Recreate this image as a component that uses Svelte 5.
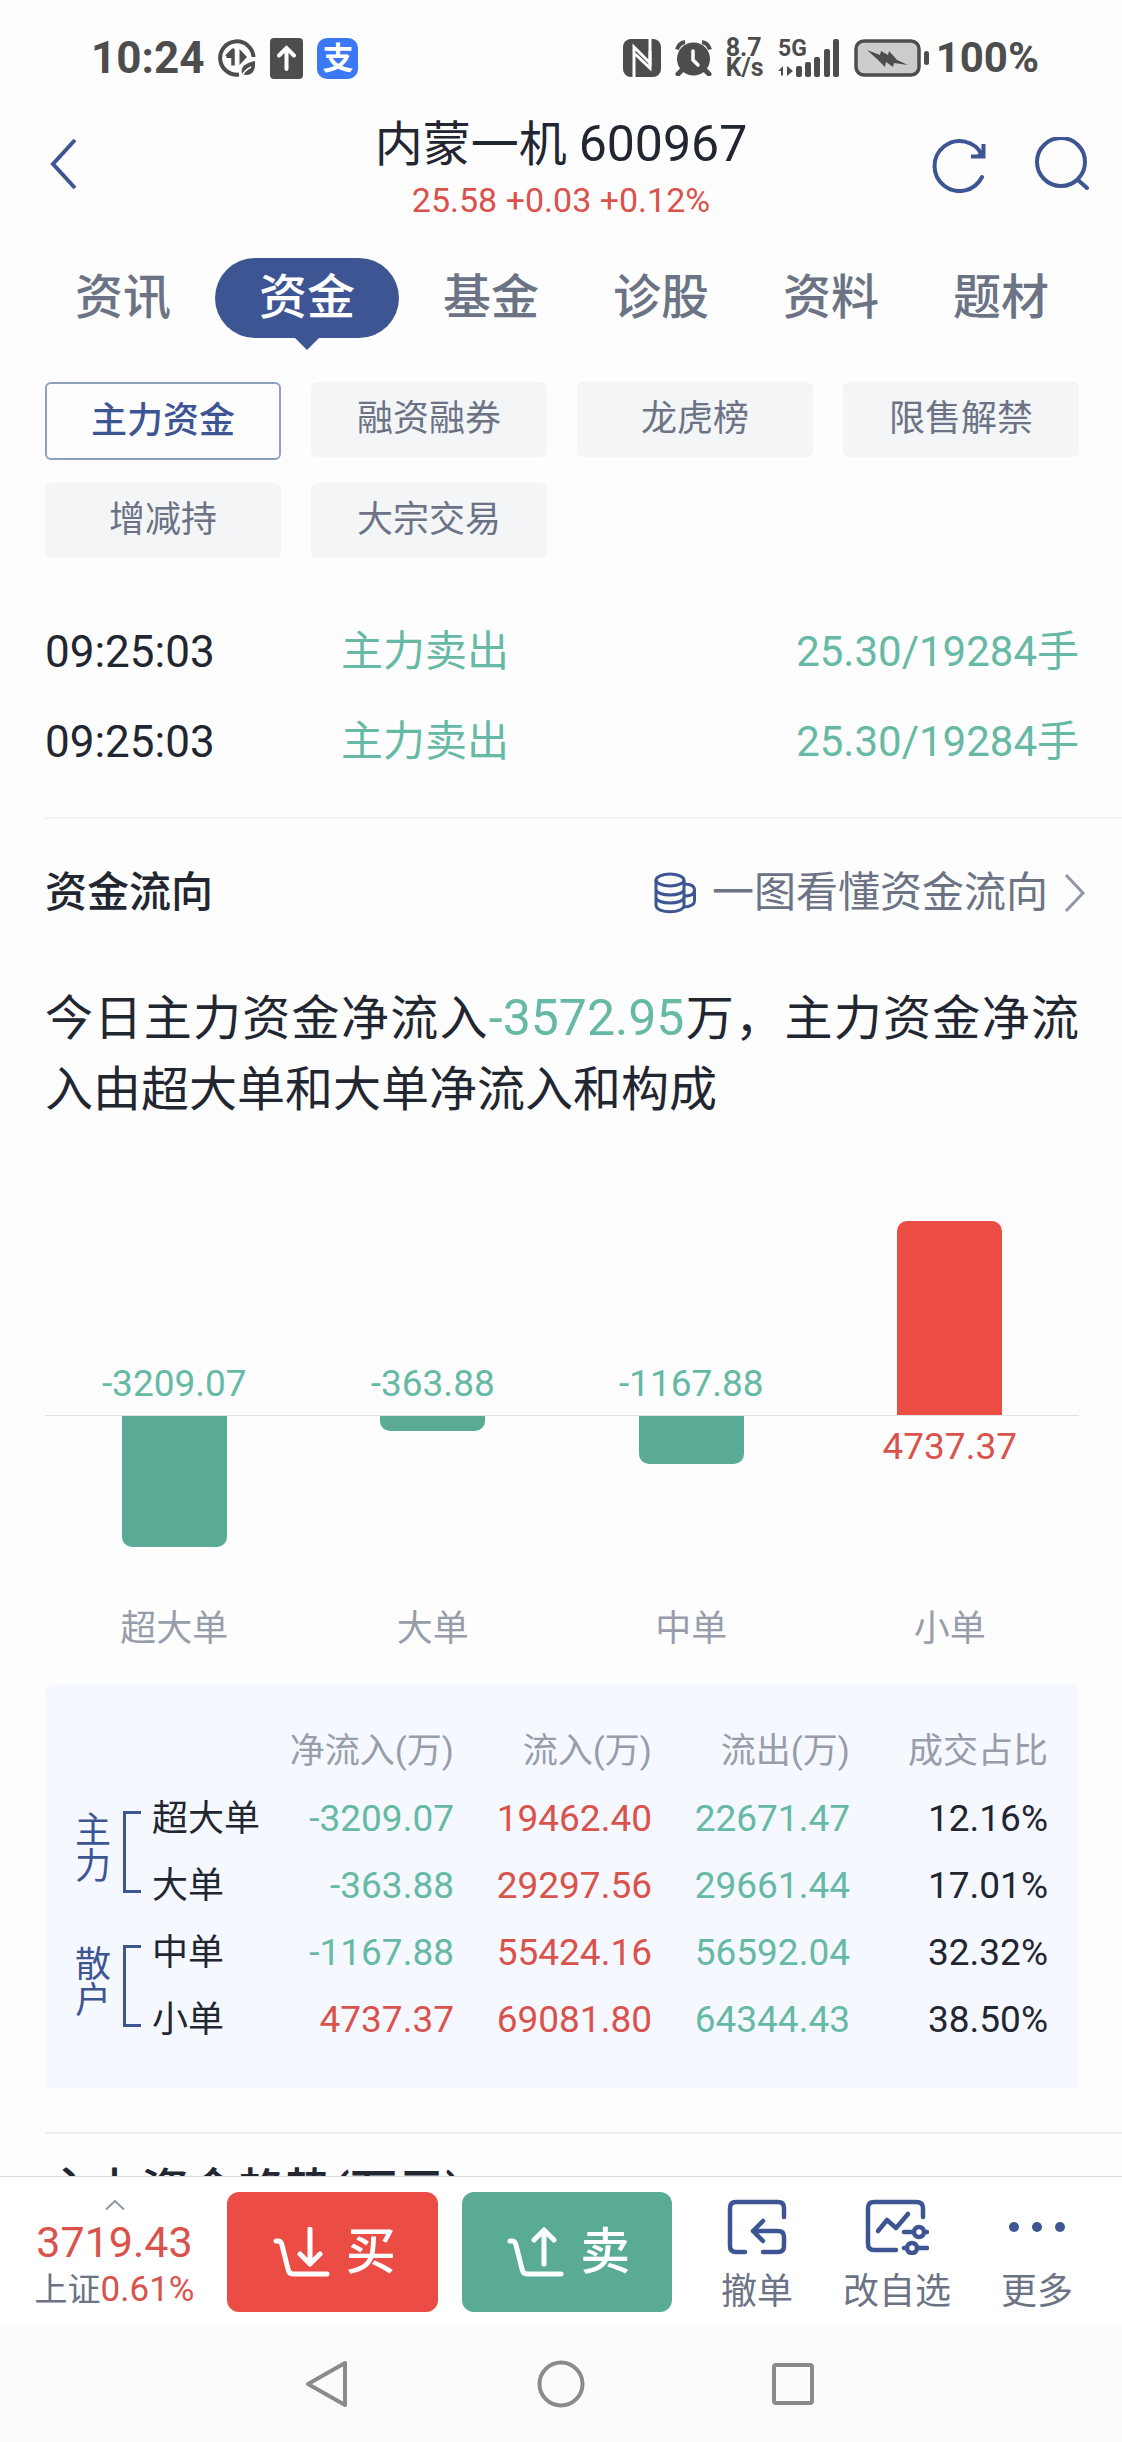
<script lang="ts">
  interface Flow {
    name: string;
    net: number;
    inflow: string;
    outflow: string;
    share: string;
  }

  interface Group {
    label: string;
    flows: Flow[];
  }

  const tabs = ["资讯", "资金", "基金", "诊股", "资料", "题材"];
  const filters = ["主力资金", "融资融券", "龙虎榜", "限售解禁", "增减持", "大宗交易"];

  const trades = [
    { time: "09:25:03", kind: "主力卖出", deal: "25.30/19284手" },
    { time: "09:25:03", kind: "主力卖出", deal: "25.30/19284手" },
  ];

  const groups: Group[] = [
    {
      label: "主力",
      flows: [
        { name: "超大单", net: -3209.07, inflow: "19462.40", outflow: "22671.47", share: "12.16%" },
        { name: "大单", net: -363.88, inflow: "29297.56", outflow: "29661.44", share: "17.01%" },
      ],
    },
    {
      label: "散户",
      flows: [
        { name: "中单", net: -1167.88, inflow: "55424.16", outflow: "56592.04", share: "32.32%" },
        { name: "小单", net: 4737.37, inflow: "69081.80", outflow: "64344.43", share: "38.50%" },
      ],
    },
  ];

  const MAX_BAR = 194;
  const flows = groups.flatMap((g) => g.flows);
  const peak = Math.max(...flows.map((f) => Math.abs(f.net)));

  let activeTab = $state("资金");
  let activeFilter = $state("主力资金");

  function barHeight(net: number) {
    return Math.round((Math.abs(net) / peak) * MAX_BAR);
  }
</script>

<div class="app">
  <div class="status">
    <div class="status-side">
      <span class="clock">10:24</span>
      <svg width="38" height="38" viewBox="0 0 38 38" fill="none">
        <path d="M35.5 18A16.7 16.7 0 1 0 21 35.6" stroke="#4d4d4d" stroke-width="4" />
        <path d="M8.5 17.5 15 11v15.5" stroke="#4d4d4d" stroke-width="3.5" stroke-linejoin="round" />
        <path d="M8 19h6v-7z" fill="#4d4d4d" />
        <path d="M21.5 10v16L29 18z" fill="#4d4d4d" />
        <path d="M37 22c-9 2-15 5-13 13 8 3 14-1 13-13z" fill="#4d4d4d" />
        <path d="M24 37c2-5 5-7 9-9" stroke="#fff" stroke-width="1.5" />
      </svg>
      <svg width="33" height="41" viewBox="0 0 33 41" fill="none">
        <rect width="33" height="41" rx="4" fill="#4d4d4d" />
        <path d="M16.500 31V10M9 17.500l7.500-7.500 7.500 7.500" stroke="#fff" stroke-width="4" stroke-linecap="round" />
      </svg>
      <span class="pay">支</span>
    </div>
    <div class="status-side">
      <svg width="38" height="38" viewBox="0 0 38 38" fill="none">
        <rect width="38" height="38" rx="8" fill="#4d4d4d" />
        <path d="M11 38V8l16 16V12" stroke="#fff" stroke-width="3" />
        <path d="M27 0v30L12 16" stroke="#fff" stroke-width="3" transform="translate(0 -1)" />
      </svg>
      <svg width="37" height="36" viewBox="0 0 37 36" fill="none">
        <circle cx="18.500" cy="19" r="16.500" fill="#4d4d4d" />
        <path d="M2 9.500Q4 3 10 2M35 9.500Q33 3 27 2" stroke="#4d4d4d" stroke-width="4" />
        <path d="M7 30l-4 4M30 30l4 4" stroke="#4d4d4d" stroke-width="5" stroke-linecap="round" />
        <path d="M18 11v9l5 5" stroke="#fff" stroke-width="3.500" stroke-linecap="round" stroke-linejoin="round" />
      </svg>
      <span class="speed">8.7<br />K/s</span>
      <svg class="signal" width="62" height="38" viewBox="0 0 62 38" fill="#4d4d4d">
        <text x="0" y="17">5G</text>
        <path d="M0 32l5-5v9.500H3V32zM9 27v10l6-5z" />
        <rect x="18" y="27" width="6" height="11" rx="2" />
        <rect x="27" y="23" width="6" height="15" rx="2" />
        <rect x="36" y="18" width="6" height="20" rx="2" />
        <rect x="46" y="10" width="6" height="28" rx="2" />
        <rect x="55" y="0" width="6" height="38" rx="2" />
      </svg>
      <svg width="76" height="38" viewBox="0 0 76 38">
        <rect x="2" y="2" width="63" height="34" rx="8" fill="#ccc" stroke="#4d4d4d" stroke-width="3.500" />
        <rect x="70" y="12" width="5" height="14" rx="2.500" fill="#4d4d4d" />
        <path d="M13 11l13 5 1-4 7 4 1-4 8 9 11 5-14-2-1 4-7-5-1 5-8-8z" fill="#4d4d4d" />
      </svg>
      <span class="charge">100%</span>
    </div>
  </div>

  <header class="header">
    <button type="button" class="icon-btn back" aria-label="返回">
      <svg width="28" height="54" viewBox="0 0 28 54" fill="none" stroke="#3e5594" stroke-width="4">
        <path d="M26 3 4 27l22 24" />
      </svg>
    </button>
    <div class="stock">
      <h1>内蒙一机 <span>600967</span></h1>
      <p class="rise">25.58 +0.03 +0.12%</p>
    </div>
    <div class="tools">
      <button type="button" class="icon-btn" aria-label="刷新">
        <svg width="56" height="56" viewBox="0 0 56 56" fill="none" stroke="#3e5594" stroke-width="4">
          <path d="M50 40A25 25 0 1 1 50 18" stroke-linecap="round" />
          <path d="M51.500 7v12.500H39" />
          <path d="M44 19l7-7v7z" fill="#3e5594" stroke="none" />
        </svg>
      </button>
      <button type="button" class="icon-btn" aria-label="搜索">
        <svg width="56" height="56" viewBox="0 0 56 56" fill="none" stroke="#3e5594" stroke-width="4">
          <circle cx="28" cy="25" r="24" />
          <path d="M45 43l9 8" stroke-linecap="round" />
        </svg>
      </button>
    </div>
  </header>

  <main class="content">
    <nav class="tabs">
      {#each tabs as tab (tab)}
        <button type="button" class="tab" class:active={tab === activeTab} onclick={() => (activeTab = tab)}>
          {tab}
        </button>
      {/each}
    </nav>

    <div class="filters">
      {#each filters as f (f)}
        <button type="button" class="filter" class:active={f === activeFilter} onclick={() => (activeFilter = f)}>
          {f}
        </button>
      {/each}
    </div>

    <ul class="trades">
      {#each trades as t}
        <li>
          <span class="time">{t.time}</span>
          <span class="fall">{t.kind}</span>
          <span class="fall">{t.deal}</span>
        </li>
      {/each}
    </ul>

    <section class="flow">
      <div class="flow-head">
        <h2>资金流向</h2>
        <a href="#guide">
          <svg width="42" height="42" viewBox="0 0 42 42" fill="none" stroke="#3e5594" stroke-width="3">
            <ellipse cx="16" cy="8" rx="14" ry="6" />
            <path d="M2 8v25c0 9 28 9 28 0V8M2 17c0 8 28 8 28 0M2 25c0 8 28 8 28 0" />
            <path d="M30 12c7 0 10.500 2 10.500 6v11c0 4-4 5.500-10.500 6M40.500 18c0 4-4 6-10.500 6" />
          </svg>
          <span>一图看懂资金流向</span>
          <svg width="22" height="38" viewBox="0 0 22 38" fill="none" stroke="#9096a4" stroke-width="3">
            <path d="M2 1l17 18L2 37" />
          </svg>
        </a>
      </div>

      <p class="summary">
        今日主力资金净流入<span class="fall">-3572.95</span>万，主力资金净流入由超大单和大单净流入和构成
      </p>

      <div class="chart">
        {#each flows as f (f.name)}
          <div class="column">
            <div class="above">
              {#if f.net > 0}
                <div class="bar up" style="height: {barHeight(f.net)}px"></div>
              {:else}
                <span class="value fall">{f.net.toFixed(2)}</span>
              {/if}
            </div>
            <div class="below">
              {#if f.net > 0}
                <span class="value rise">{f.net.toFixed(2)}</span>
              {:else}
                <div class="bar down" style="height: {barHeight(f.net)}px"></div>
              {/if}
            </div>
            <span class="column-name">{f.name}</span>
          </div>
        {/each}
      </div>

      <div class="panel">
        <table>
          <colgroup>
            <col class="c-group" />
            <col class="c-name" />
            <col class="c-net" />
            <col />
            <col />
            <col />
          </colgroup>
          <thead>
            <tr>
              <td colspan="2"></td>
              <th scope="col">净流入(万)</th>
              <th scope="col">流入(万)</th>
              <th scope="col">流出(万)</th>
              <th scope="col">成交占比</th>
            </tr>
          </thead>
          <tbody>
            {#each groups as g (g.label)}
              {#each g.flows as f, i (f.name)}
                <tr>
                  {#if i === 0}
                    <th scope="rowgroup" rowspan={g.flows.length}>
                      <div class="group">
                        <span>{g.label}</span>
                        <i></i>
                      </div>
                    </th>
                  {/if}
                  <th scope="row">{f.name}</th>
                  <td class={f.net > 0 ? "rise" : "fall"}>{f.net.toFixed(2)}</td>
                  <td class="rise">{f.inflow}</td>
                  <td class="fall">{f.outflow}</td>
                  <td>{f.share}</td>
                </tr>
              {/each}
            {/each}
          </tbody>
        </table>
      </div>
    </section>

    <section class="trend">
      <h2>主力资金趋势(万元)</h2>
    </section>
  </main>

  <footer class="toolbar">
    <button type="button" class="index">
      <svg width="20" height="10" viewBox="0 0 20 10" fill="none" stroke="#9096a4" stroke-width="2">
        <path d="M1 9.500 10 1l9 8.500" />
      </svg>
      <span class="index-value rise">3719.43</span>
      <span class="index-name">上证<span class="rise">0.61%</span></span>
    </button>
    <div class="orders">
      <button type="button" class="order buy">
        <svg width="57" height="50" viewBox="0 0 57 50" fill="none" stroke="#fff" stroke-width="5" stroke-linecap="round" stroke-linejoin="round">
          <path d="M3 14h2q3 0 4 4l6 24q1 5 5 5h34M37 2v35M27 27l10 10 10-10" />
        </svg>
        买
      </button>
      <button type="button" class="order sell">
        <svg width="57" height="50" viewBox="0 0 57 50" fill="none" stroke="#fff" stroke-width="5" stroke-linecap="round" stroke-linejoin="round">
          <path d="M3 14h2q3 0 4 4l6 24q1 5 5 5h34M37 37V3M27 13 37 3l10 10" />
        </svg>
        卖
      </button>
    </div>
    <div class="actions">
      <button type="button" class="action">
        <svg width="60" height="56" viewBox="0 0 60 56" fill="none" stroke="#3e5594" stroke-width="4.500" stroke-linecap="round" stroke-linejoin="round">
          <path d="M18 53H9q-6 0-6-6V9q0-6 6-6h42q6 0 6 6v9" />
          <path d="M36 53h15q6 0 6-6V38q0-6-6-6H26M36 22 26 32l10 10" />
        </svg>
        撤单
      </button>
      <button type="button" class="action">
        <svg width="64" height="56" viewBox="0 0 64 56" fill="none" stroke="#3e5594" stroke-width="4.500" stroke-linecap="round" stroke-linejoin="round">
          <path d="M31 51H9q-6 0-6-6V9q0-6 6-6h42q7 0 7 6v9" />
          <path d="M13 32l9-11 9 8 12-14" />
          <path d="M39 33h8M60 33h2M39 49h2M53 49h9" />
          <circle cx="54" cy="33" r="5" />
          <circle cx="47" cy="49" r="5" />
        </svg>
        改自选
      </button>
      <button type="button" class="action">
        <svg width="60" height="56" viewBox="0 0 60 56" fill="#3e5594">
          <circle cx="7" cy="28" r="5" />
          <circle cx="30" cy="28" r="5" />
          <circle cx="53" cy="28" r="5" />
        </svg>
        更多
      </button>
    </div>
  </footer>

  <div class="system-nav">
    <button type="button" class="icon-btn" aria-label="系统返回">
      <svg width="48" height="48" viewBox="0 0 48 48" fill="none" stroke="#8b8b8b" stroke-width="4" stroke-linejoin="round">
        <path d="M41 3v42L4 24z" />
      </svg>
    </button>
    <button type="button" class="icon-btn" aria-label="主屏幕">
      <svg width="48" height="48" viewBox="0 0 48 48" fill="none" stroke="#8b8b8b" stroke-width="4">
        <circle cx="24" cy="24" r="21.500" />
      </svg>
    </button>
    <button type="button" class="icon-btn" aria-label="最近任务">
      <svg width="48" height="48" viewBox="0 0 48 48" fill="none" stroke="#8b8b8b" stroke-width="4">
        <rect x="4" y="5" width="38" height="38" rx="2" />
      </svg>
    </button>
  </div>
</div>

<style>
  :global(body) {
    background: #fdfdfd;
  }

  .app {
    --ink: #222631;
    --muted: #6b7385;
    --pale: #979daa;
    --navy: #3e5594;
    --red: #d9534c;
    --red-fill: #eb4d44;
    --green: #66b9a5;
    --green-fill: #59ab95;
    display: flex;
    flex-direction: column;
    height: 100vh;
    color: var(--ink);
    font-family: Roboto, "Noto Sans CJK SC", sans-serif;
    font-size: 36px;
    line-height: 50px;
  }

  h1,
  h2,
  p,
  ul {
    margin: 0;
    padding: 0;
    list-style: none;
  }

  button {
    border: none;
    margin: 0;
    padding: 0;
    background: none;
    font: inherit;
    color: inherit;
    cursor: pointer;
  }

  svg {
    display: block;
    flex-shrink: 0;
  }

  .rise {
    color: var(--red);
  }

  .fall {
    color: var(--green);
  }

  .status {
    display: flex;
    justify-content: space-between;
    padding: 36px 83px 36px 91px;
    color: #4d4d4d;
    font-weight: 700;
  }

  .status-side {
    display: flex;
    align-items: center;
    gap: 14px;
    height: 44px;
  }

  .clock {
    font-size: 44px;
    line-height: 44px;
  }

  .charge {
    margin-left: -8px;
    font-size: 42px;
    line-height: 44px;
  }

  .pay {
    width: 41px;
    border-radius: 10px;
    background: #3a78f5;
    color: #fff;
    font-size: 31px;
    line-height: 41px;
    text-align: center;
  }

  .speed {
    font-size: 25px;
    line-height: 20px;
  }

  .signal {
    overflow: visible;
    font-size: 23px;
  }

  .header {
    display: grid;
    grid-template-columns: 1fr auto 1fr;
    align-items: start;
    padding: 0 33px;
  }

  .icon-btn {
    display: flex;
  }

  .back,
  .tools {
    padding-top: 21px;
  }

  .back {
    padding-left: 16px;
  }

  .stock {
    text-align: center;
  }

  .stock h1 {
    font-size: 48px;
    line-height: 56px;
    font-weight: 400;
  }

  .stock h1 span {
    font-size: 50px;
  }

  .stock p {
    font-size: 34px;
    line-height: 54px;
  }

  .tools {
    display: flex;
    justify-content: flex-end;
    gap: 45px;
  }

  .content {
    flex: 1;
    min-height: 0;
    overflow: hidden;
  }

  .tabs {
    display: flex;
    justify-content: center;
    margin-top: 31px;
    padding-left: 2px;
  }

  .tab {
    padding: 0 37px;
    color: var(--muted);
    font-size: 48px;
    font-weight: 500;
    line-height: 80px;
  }

  .tab.active {
    position: relative;
    margin: 0 7px;
    padding: 0 44px;
    border-radius: 40px;
    background: var(--navy);
    color: #fff;
  }

  .tab.active::after {
    content: "";
    position: absolute;
    top: 100%;
    left: 50%;
    margin-left: -12px;
    border: 12px solid transparent;
    border-top-color: var(--navy);
    border-bottom: none;
  }

  .filters {
    display: grid;
    grid-template-columns: repeat(4, 1fr);
    align-items: start;
    gap: 23px 30px;
    margin: 44px 43px 0 45px;
  }

  .filter {
    border-radius: 6px;
    background: #f3f5f7;
    color: var(--muted);
    line-height: 75px;
  }

  .filter.active {
    border: 2px solid #8f9fbe;
    background: none;
    color: var(--navy);
    font-weight: 500;
    line-height: 74px;
  }

  .trades {
    margin: 49px 0 0 45px;
    padding: 0 43px 30px 0;
    border-bottom: 2px solid #f1f2f4;
    font-size: 42px;
    line-height: 90px;
  }

  .trades li {
    display: grid;
    grid-template-columns: 296px 1fr auto;
  }

  .time {
    font-size: 44px;
  }

  .flow {
    padding: 44px 43px 44px 45px;
  }

  .flow-head {
    display: flex;
    align-items: center;
    justify-content: space-between;
    margin-right: -7px;
    font-size: 42px;
    line-height: 60px;
  }

  .flow-head h2 {
    font-size: 42px;
    font-weight: 500;
  }

  .flow-head a {
    display: flex;
    align-items: center;
    gap: 16px;
    color: var(--muted);
    text-decoration: none;
  }

  .summary {
    margin-top: 60px;
    font-size: 48px;
    line-height: 71px;
    text-align: justify;
  }

  .summary span {
    font-size: 50px;
  }

  .chart {
    display: grid;
    grid-template-columns: repeat(4, 1fr);
    margin-top: 96px;
  }

  .column {
    display: flex;
    flex-direction: column;
    text-align: center;
  }

  .above,
  .below {
    display: flex;
    flex-direction: column;
    align-items: center;
  }

  .above {
    justify-content: flex-end;
    height: 194px;
  }

  .below {
    height: 188px;
    border-top: 1px solid #e1e2e4;
  }

  .bar {
    width: 105px;
  }

  .bar.up {
    border-radius: 10px 10px 0 0;
    background: var(--red-fill);
  }

  .bar.down {
    border-radius: 0 0 10px 10px;
    background: var(--green-fill);
  }

  .value {
    padding: 6px 0;
    font-size: 37px;
  }

  .column-name {
    color: var(--pale);
  }

  .panel {
    margin-top: 30px;
    padding: 34px 31px 35px 30px;
    border-radius: 6px;
    background: #f5f8ff;
  }

  table {
    width: 100%;
    table-layout: fixed;
    border-collapse: collapse;
  }

  .c-group {
    width: 77px;
  }

  .c-name {
    width: 126px;
  }

  .c-net {
    width: 176px;
  }

  th,
  td {
    height: 67px;
    padding: 0;
    font-weight: 400;
    text-align: right;
    white-space: nowrap;
  }

  tbody td {
    font-size: 37px;
  }

  thead th {
    color: var(--pale);
    font-size: 35px;
  }

  tbody th {
    text-align: left;
  }

  .group {
    display: flex;
    align-items: center;
    gap: 12px;
    color: var(--navy);
    line-height: 36px;
  }

  .group span {
    width: 36px;
    padding-bottom: 6px;
    white-space: normal;
  }

  .group i {
    box-sizing: border-box;
    width: 18px;
    height: 82px;
    border: 3px solid var(--navy);
    border-right: none;
  }

  .trend {
    margin-left: 45px;
    border-top: 2px solid #eeeff1;
  }

  .trend h2 {
    padding-top: 22px;
    font-size: 48px;
    font-weight: 500;
    line-height: 72px;
  }

  .toolbar {
    display: flex;
    padding: 15px 15px 13px 0;
    border-top: 1px solid #d9dbdf;
    background: #fff;
  }

  .index {
    display: flex;
    flex-direction: column;
    align-items: center;
    width: 227px;
    padding: 8px 0 0 2px;
  }

  .index-value {
    margin-top: 7px;
    font-size: 43px;
    line-height: 51px;
  }

  .index-name {
    color: var(--muted);
    font-size: 33px;
    line-height: 44px;
  }

  .index-name span {
    font-size: 35px;
  }

  .orders {
    display: flex;
    flex: 1;
    gap: 24px;
  }

  .order {
    display: flex;
    flex: 1;
    align-items: center;
    justify-content: center;
    gap: 16px;
    padding-left: 4px;
    border-radius: 12px;
    color: #fff;
    font-size: 50px;
    font-weight: 500;
  }

  .buy {
    background: var(--red-fill);
  }

  .sell {
    background: var(--green-fill);
  }

  .actions {
    display: flex;
    margin-left: 15px;
  }

  .action {
    display: flex;
    flex-direction: column;
    align-items: center;
    gap: 17px;
    width: 140px;
    padding-top: 7px;
    color: var(--muted);
    line-height: 40px;
  }

  .system-nav {
    display: flex;
    justify-content: center;
    gap: 185px;
    padding: 35px 0 34px;
    background: #fbfbfb;
  }
</style>
